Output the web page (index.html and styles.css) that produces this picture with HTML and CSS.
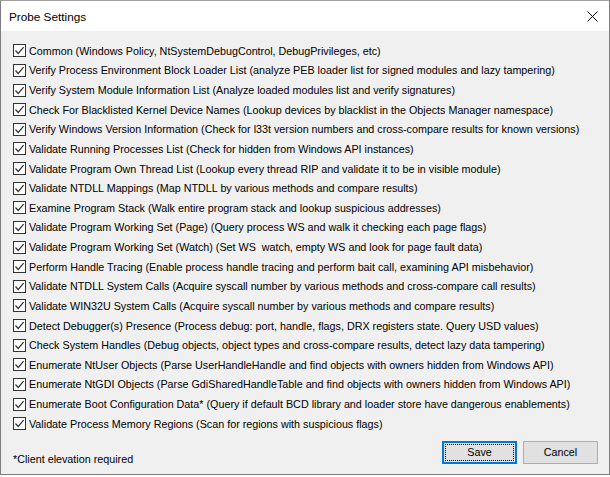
FILE: index.html
```html
<!DOCTYPE html>
<html>
<head>
<meta charset="utf-8">
<link rel="stylesheet" href="styles.css">
</head>
<body>
<div class="window">
  <div class="titlebar">
    <span class="title">Probe Settings</span>
    <svg class="close" width="11" height="11" viewBox="0 0 11 11"><path d="M0.5 0.5 L10.5 10.5 M10.5 0.5 L0.5 10.5" stroke="#000" stroke-width="1" fill="none"/></svg>
  </div>
  <div class="body">
    <ul class="options">
      <li class="opt"><span class="cb"><svg width="11" height="11" viewBox="0 0 11 11"><path d="M1.5 5.5 L4.2 8.5 L9.6 2.2" stroke="#333" stroke-width="1.2" fill="none"/></svg></span><span>Common (Windows Policy, NtSystemDebugControl, DebugPrivileges, etc)</span></li>
      <li class="opt"><span class="cb"><svg width="11" height="11" viewBox="0 0 11 11"><path d="M1.5 5.5 L4.2 8.5 L9.6 2.2" stroke="#333" stroke-width="1.2" fill="none"/></svg></span><span>Verify Process Environment Block Loader List (analyze PEB loader list for signed modules and lazy tampering)</span></li>
      <li class="opt"><span class="cb"><svg width="11" height="11" viewBox="0 0 11 11"><path d="M1.5 5.5 L4.2 8.5 L9.6 2.2" stroke="#333" stroke-width="1.2" fill="none"/></svg></span><span>Verify System Module Information List (Analyze loaded modules list and verify signatures)</span></li>
      <li class="opt"><span class="cb"><svg width="11" height="11" viewBox="0 0 11 11"><path d="M1.5 5.5 L4.2 8.5 L9.6 2.2" stroke="#333" stroke-width="1.2" fill="none"/></svg></span><span>Check For Blacklisted Kernel Device Names (Lookup devices by blacklist in the Objects Manager namespace)</span></li>
      <li class="opt"><span class="cb"><svg width="11" height="11" viewBox="0 0 11 11"><path d="M1.5 5.5 L4.2 8.5 L9.6 2.2" stroke="#333" stroke-width="1.2" fill="none"/></svg></span><span>Verify Windows Version Information (Check for l33t version numbers and cross-compare results for known versions)</span></li>
      <li class="opt"><span class="cb"><svg width="11" height="11" viewBox="0 0 11 11"><path d="M1.5 5.5 L4.2 8.5 L9.6 2.2" stroke="#333" stroke-width="1.2" fill="none"/></svg></span><span>Validate Running Processes List (Check for hidden from Windows API instances)</span></li>
      <li class="opt"><span class="cb"><svg width="11" height="11" viewBox="0 0 11 11"><path d="M1.5 5.5 L4.2 8.5 L9.6 2.2" stroke="#333" stroke-width="1.2" fill="none"/></svg></span><span>Validate Program Own Thread List (Lookup every thread RIP and validate it to be in visible module)</span></li>
      <li class="opt"><span class="cb"><svg width="11" height="11" viewBox="0 0 11 11"><path d="M1.5 5.5 L4.2 8.5 L9.6 2.2" stroke="#333" stroke-width="1.2" fill="none"/></svg></span><span>Validate NTDLL Mappings (Map NTDLL by various methods and compare results)</span></li>
      <li class="opt"><span class="cb"><svg width="11" height="11" viewBox="0 0 11 11"><path d="M1.5 5.5 L4.2 8.5 L9.6 2.2" stroke="#333" stroke-width="1.2" fill="none"/></svg></span><span>Examine Program Stack (Walk entire program stack and lookup suspicious addresses)</span></li>
      <li class="opt"><span class="cb"><svg width="11" height="11" viewBox="0 0 11 11"><path d="M1.5 5.5 L4.2 8.5 L9.6 2.2" stroke="#333" stroke-width="1.2" fill="none"/></svg></span><span>Validate Program Working Set (Page) (Query process WS and walk it checking each page flags)</span></li>
      <li class="opt"><span class="cb"><svg width="11" height="11" viewBox="0 0 11 11"><path d="M1.5 5.5 L4.2 8.5 L9.6 2.2" stroke="#333" stroke-width="1.2" fill="none"/></svg></span><span>Validate Program Working Set (Watch) (Set WS&nbsp; watch, empty WS and look for page fault data)</span></li>
      <li class="opt"><span class="cb"><svg width="11" height="11" viewBox="0 0 11 11"><path d="M1.5 5.5 L4.2 8.5 L9.6 2.2" stroke="#333" stroke-width="1.2" fill="none"/></svg></span><span>Perform Handle Tracing (Enable process handle tracing and perform bait call, examining API misbehavior)</span></li>
      <li class="opt"><span class="cb"><svg width="11" height="11" viewBox="0 0 11 11"><path d="M1.5 5.5 L4.2 8.5 L9.6 2.2" stroke="#333" stroke-width="1.2" fill="none"/></svg></span><span>Validate NTDLL System Calls (Acquire syscall number by various methods and cross-compare call results)</span></li>
      <li class="opt"><span class="cb"><svg width="11" height="11" viewBox="0 0 11 11"><path d="M1.5 5.5 L4.2 8.5 L9.6 2.2" stroke="#333" stroke-width="1.2" fill="none"/></svg></span><span>Validate WIN32U System Calls (Acquire syscall number by various methods and compare results)</span></li>
      <li class="opt"><span class="cb"><svg width="11" height="11" viewBox="0 0 11 11"><path d="M1.5 5.5 L4.2 8.5 L9.6 2.2" stroke="#333" stroke-width="1.2" fill="none"/></svg></span><span>Detect Debugger(s) Presence (Process debug: port, handle, flags, DRX registers state. Query USD values)</span></li>
      <li class="opt"><span class="cb"><svg width="11" height="11" viewBox="0 0 11 11"><path d="M1.5 5.5 L4.2 8.5 L9.6 2.2" stroke="#333" stroke-width="1.2" fill="none"/></svg></span><span>Check System Handles (Debug objects, object types and cross-compare results, detect lazy data tampering)</span></li>
      <li class="opt"><span class="cb"><svg width="11" height="11" viewBox="0 0 11 11"><path d="M1.5 5.5 L4.2 8.5 L9.6 2.2" stroke="#333" stroke-width="1.2" fill="none"/></svg></span><span>Enumerate NtUser Objects (Parse UserHandleHandle and find objects with owners hidden from Windows API)</span></li>
      <li class="opt"><span class="cb"><svg width="11" height="11" viewBox="0 0 11 11"><path d="M1.5 5.5 L4.2 8.5 L9.6 2.2" stroke="#333" stroke-width="1.2" fill="none"/></svg></span><span>Enumerate NtGDI Objects (Parse GdiSharedHandleTable and find objects with owners hidden from Windows API)</span></li>
      <li class="opt"><span class="cb"><svg width="11" height="11" viewBox="0 0 11 11"><path d="M1.5 5.5 L4.2 8.5 L9.6 2.2" stroke="#333" stroke-width="1.2" fill="none"/></svg></span><span>Enumerate Boot Configuration Data* (Query if default BCD library and loader store have dangerous enablements)</span></li>
      <li class="opt"><span class="cb"><svg width="11" height="11" viewBox="0 0 11 11"><path d="M1.5 5.5 L4.2 8.5 L9.6 2.2" stroke="#333" stroke-width="1.2" fill="none"/></svg></span><span>Validate Process Memory Regions (Scan for regions with suspicious flags)</span></li>
    </ul>
    <div class="footer">
      <span class="note">*Client elevation required</span>
      <div class="buttons">
        <button class="btn btn-default"><span class="focus">Save</span></button>
        <button class="btn">Cancel</button>
      </div>
    </div>
  </div>
</div>
</body>
</html>
```
FILE: styles.css
```css
html, body {
  margin: 0;
  padding: 0;
  background: #ffffff;
}
.window {
  box-sizing: border-box;
  width: 610px;
  height: 475px;
  border: 1px solid #7e7e7e;
  border-top-color: #a0a0a0;
  background: #f0f0f0;
  display: flex;
  flex-direction: column;
  font-family: "Liberation Sans", Arial, sans-serif;
  font-size: 10.75px;
  color: #000;
}
.titlebar {
  height: 30px;
  background: #ffffff;
  display: flex;
  align-items: center;
  justify-content: space-between;
  padding: 0 11px 0 8px;
}
.title {
  font-size: 11.75px;
  font-family: "Liberation Sans", Arial, sans-serif;
}
.close {
  display: block;
}
.body {
  flex: 1;
  display: flex;
  flex-direction: column;
  padding: 10px 11px 0 12px;
}
.options {
  list-style: none;
  margin: 0;
  padding: 0;
}
.opt {
  height: 19.63px;
  display: flex;
  align-items: center;
  gap: 3px;
  white-space: nowrap;
}
.cb {
  box-sizing: border-box;
  width: 13px;
  height: 13px;
  border: 1px solid #333333;
  background: #ffffff;
  display: flex;
  flex: none;
}
.cb svg {
  display: block;
}
.footer {
  display: flex;
  justify-content: space-between;
  align-items: flex-start;
  margin-top: 7px;
}
.note {
  margin-top: 12px;
}
.buttons {
  display: flex;
  gap: 6px;
}
.btn {
  box-sizing: border-box;
  width: 75px;
  height: 23px;
  background: #e1e1e1;
  border: 1px solid #adadad;
  font-family: "Liberation Sans", Arial, sans-serif;
  font-size: 10.75px;
  color: #000;
  padding: 0;
  display: flex;
  align-items: center;
  justify-content: center;
}
.btn-default {
  border: 2px solid #0078d7;
  padding: 1px;
}
.focus {
  box-sizing: border-box;
  width: 100%;
  height: 100%;
  border: 1px dotted #000;
  display: flex;
  align-items: center;
  justify-content: center;
}
```
